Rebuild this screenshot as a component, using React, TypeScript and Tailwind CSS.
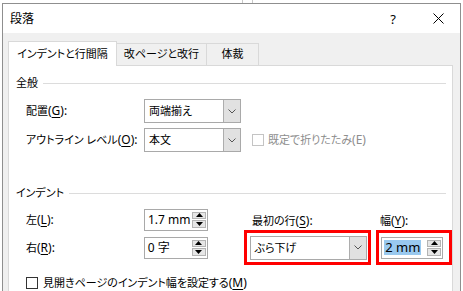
const font = "font-['Noto_Sans','Noto_Sans_CJK_JP',sans-serif] [font-feature-settings:'palt']";

// latin parts are drawn a bit larger than the japanese ones, like Yu Gothic UI
function L({ children }: { children: React.ReactNode }) {
  return <span className="text-[12px]">{children}</span>;
}

function U({ children }: { children: React.ReactNode }) {
  return <span className="underline underline-offset-2">{children}</span>;
}

function Combo({ value, w }: { value: string; w: string }) {
  return (
    <div className={`${w} h-[24px] flex border border-[#a9a9a9] bg-white`}>
      <span className="flex-1 pl-[4px] leading-[22px] whitespace-nowrap overflow-hidden">{value}</span>
      <div className="w-[17px] bg-[#e1e1e1] border-l border-[#adadad] flex items-center justify-center">
        <svg width="8" height="5" viewBox="0 0 8 5">
          <path d="M0.5 0.5 L4 4 L7.5 0.5" fill="none" stroke="#555" strokeWidth="1" />
        </svg>
      </div>
    </div>
  );
}

function SpinButtons() {
  return (
    <div className="w-[15px] flex flex-col gap-px py-[2px] pr-[1px]">
      <div className="flex-1 bg-[#e6e6e6] border border-[#b4b4b4] flex items-center justify-center">
        <svg width="7" height="4" viewBox="0 0 7 4">
          <path d="M3.5 0 L7 4 L0 4 Z" fill="#000" />
        </svg>
      </div>
      <div className="flex-1 bg-[#e6e6e6] border border-[#b4b4b4] flex items-center justify-center">
        <svg width="7" height="4" viewBox="0 0 7 4">
          <path d="M0 0 L7 0 L3.5 4 Z" fill="#000" />
        </svg>
      </div>
    </div>
  );
}

function Spin({ children, w, selected }: { children: React.ReactNode; w: string; selected?: boolean }) {
  return (
    <div className={`${w} h-[22px] flex border border-[#a9a9a9] bg-white`}>
      <div className="flex-1 pl-[2px] flex items-center overflow-hidden whitespace-nowrap">
        {selected ? (
          <span className="bg-[#99c9ef] px-px leading-[14px]">{children}</span>
        ) : (
          <span className="pl-px">{children}</span>
        )}
      </div>
      <SpinButtons />
    </div>
  );
}

function Heading({ text }: { text: string }) {
  return (
    <div className="h-[16px] flex items-center">
      <span className="leading-[16px]">{text}</span>
      <div className="flex-1 h-px bg-[#dcdcdc] ml-[5px] mr-[6px]" />
    </div>
  );
}

function Check({ disabled }: { disabled?: boolean }) {
  return (
    <div
      className={
        disabled
          ? "w-[12px] h-[12px] border border-[#c4c4c4] bg-white"
          : "w-[12px] h-[12px] border border-[#333333] bg-white"
      }
    />
  );
}

export default function App() {
  return (
    <div className={`w-[463px] h-[291px] overflow-hidden bg-white text-[11px] text-black ${font}`}>
      <div className="h-[3px] flex">
        <div className="w-[242px]" />
        <div className="w-px bg-[#c8c8c8]" />
        <div className="w-[9px]" />
        <div className="w-px bg-[#c8c8c8]" />
      </div>

      <div className="ml-[2px] w-[459px] h-[300px] border border-b-0 border-[#8f8f8f] flex flex-col">
        {/* title bar */}
        <div className="h-[29px] bg-white flex items-center">
          <span className="pl-[7px] flex-1 text-[12px] leading-[16px]">段落</span>
          <div className="w-[46px] h-full flex items-center justify-center pl-[4px]">
            <span className="text-[13px] leading-[16px]">?</span>
          </div>
          <div className="w-[46px] h-full flex items-center justify-center pl-[2px]">
            <svg width="11" height="11" viewBox="0 0 11 11">
              <path d="M0.5 0.5 L10.5 10.5 M10.5 0.5 L0.5 10.5" stroke="#000" strokeWidth="1" />
            </svg>
          </div>
        </div>

        {/* body */}
        <div className="flex-1 bg-[#f0f0f0] pt-[8px] pl-[5px] flex flex-col">
          <div className="h-[24px] flex items-start">
            <div className="relative z-10 w-[109px] h-[25px] bg-white border border-b-0 border-[#d9d9d9] flex items-center justify-center">
              インデントと行間隔
            </div>
            <div className="mt-[2px] w-[90px] h-[22px] border-t border-r border-[#d9d9d9] flex items-center justify-center">
              改ページと改行
            </div>
            <div className="mt-[2px] w-[52px] h-[22px] border-t border-r border-[#d9d9d9] flex items-center justify-center">
              体裁
            </div>
          </div>

          <div className="w-[445px] flex-1 bg-white border border-[#d9d9d9] pl-[7px] flex flex-col">
            <div className="mt-[9px]">
              <Heading text="全般" />
            </div>
            <div className="pl-[10px] flex flex-col">
              <div className="mt-[8px] h-[24px] flex items-center">
                <span className="w-[118px]">
                  配置<L>(<U>G</U>):</L>
                </span>
                <Combo value="両端揃え" w="w-[97px]" />
              </div>
              <div className="mt-[5px] h-[24px] flex items-center">
                <span className="w-[118px] whitespace-nowrap">
                  アウトライン レベル<L>(<U>O</U>):</L>
                </span>
                <Combo value="本文" w="w-[97px]" />
                <div className="ml-[11px]">
                  <Check disabled />
                </div>
                <span className="ml-[4px] text-[#8d8d8d]">
                  既定で折りたたみ<L>(E)</L>
                </span>
              </div>
            </div>

            <div className="mt-[33px]">
              <Heading text="インデント" />
            </div>
            <div className="pl-[10px] flex flex-col">
              <div className="mt-[8px] h-[21px] flex items-center">
                <span className="w-[118px]">
                  左<L>(<U>L</U>):</L>
                </span>
                <Spin w="w-[64px]">
                  <L>1.7 mm</L>
                </Spin>
                <span className="ml-[44px] w-[128px] mt-[3px] whitespace-nowrap">
                  最初の行<L>(<U>S</U>):</L>
                </span>
                <span className="mt-[3px]">
                  幅<L>(<U>Y</U>):</L>
                </span>
              </div>
              <div className="h-[35px] flex items-center">
                <span className="w-[118px]">
                  右<L>(<U>R</U>):</L>
                </span>
                <Spin w="w-[64px]">
                  <L>0 </L>
                  <span className="text-[12px]">字</span>
                </Spin>
                <div className="ml-[36px] w-[128px] h-[35px] border-[3px] border-[#ff0000] flex items-center">
                  <div className="ml-[3px]">
                    <Combo value="ぶら下げ" w="w-[117px]" />
                  </div>
                </div>
                <div className="ml-[5px] w-[76px] h-[35px] border-[3px] border-[#ff0000] flex items-center">
                  <div className="ml-[2px]">
                    <Spin w="w-[62px]" selected>
                      <span className="text-[13px]">2 mm</span>
                    </Spin>
                  </div>
                </div>
              </div>
              <div className="mt-[12px] h-[12px] flex items-center">
                <Check />
                <span className="ml-[5px] whitespace-nowrap">
                  見開きページのインデント幅を設定する<L>(<U>M</U>)</L>
                </span>
              </div>
            </div>
          </div>
        </div>
      </div>
    </div>
  );
}
